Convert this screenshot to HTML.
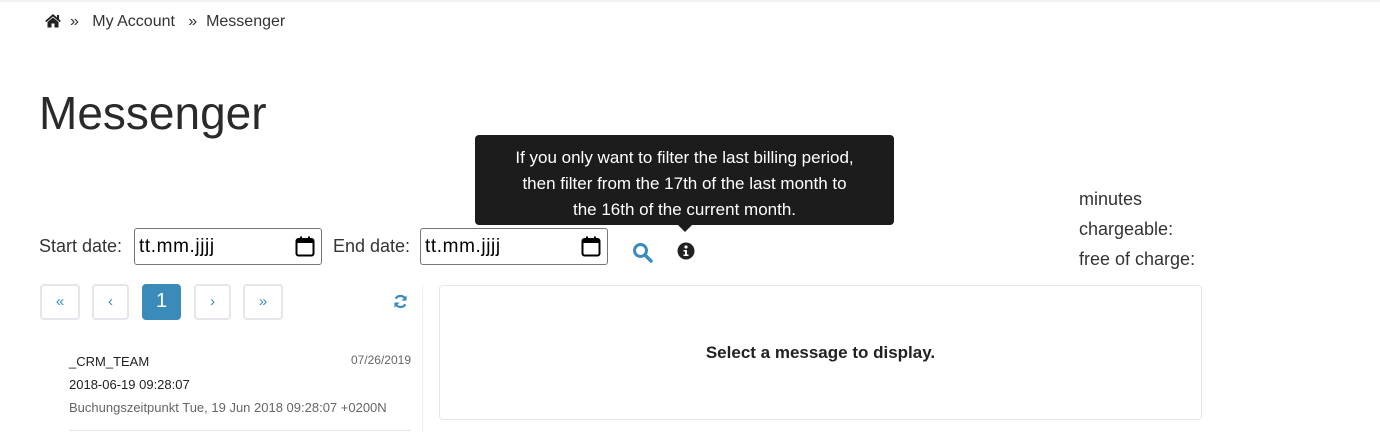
<!DOCTYPE html>
<html><head><meta charset="utf-8"><style>
*{box-sizing:border-box;margin:0;padding:0}
body{width:1380px;height:432px;overflow:hidden;background:#fff;font-family:"Liberation Sans","DejaVu Sans",sans-serif;color:#333;position:relative}
.a{position:absolute;white-space:nowrap}
.inp{position:absolute;border:1px solid #767676;border-radius:3px;height:37px;background:#fff;font-size:19px;color:#000;padding:7px 0 0 4px;letter-spacing:0.6px}
.btn{position:absolute;top:284px;height:36px;border:2px solid #e3e6ea;border-radius:4px;color:#3a8cc0;font-size:15px;text-align:center;line-height:31px}
</style></head><body>
<div class="a" style="left:0;top:0;width:1380px;height:2px;background:#f2f2f2"></div>
<svg class="a" style="left:44px;top:13px" width="18" height="15" viewBox="0 0 18 15"><path d="M9 1 L1 8 L2.5 9 L9 3.5 L15.5 9 L17 8 Z" fill="#222"/><path d="M3.5 9 L9 4.5 L14.5 9 V14.5 H10.5 V10.5 H7.5 V14.5 H3.5 Z" fill="#222"/><rect x="13" y="2" width="2" height="4" fill="#222"/></svg>
<div class="a" style="left:70px;top:13px;font-size:16px;color:#333">»&nbsp;&nbsp;&nbsp;My Account&nbsp;&nbsp;&nbsp;»&nbsp;&nbsp;Messenger</div>
<div class="a" style="left:39px;top:86px;font-size:46px;color:#2a2a2a">Messenger</div>

<div class="a" style="left:475px;top:135px;width:419px;height:90px;background:#1c1c1c;border-radius:4px;color:#fff;font-size:17px;line-height:26px;text-align:center;padding-top:10px">If you only want to filter the last billing period,<br>then filter from the 17th of the last month to<br>the 16th of the current month.</div>
<div class="a" style="left:678px;top:225px;width:0;height:0;border-left:7px solid transparent;border-right:7px solid transparent;border-top:7px solid #1c1c1c"></div>

<div class="a" style="left:39px;top:236px;font-size:18px">Start date:</div>
<div class="inp" style="left:134px;top:228px;width:188px">tt.mm.jjjj</div>
<svg class="a" style="left:295px;top:236px" width="20" height="21" viewBox="0 0 20 21"><rect x="1.5" y="3" width="17" height="16.5" rx="2" fill="none" stroke="#000" stroke-width="2"/><rect x="1.5" y="3" width="17" height="4" fill="#000"/><rect x="5" y="0.5" width="2" height="4" fill="#000"/><rect x="13" y="0.5" width="2" height="4" fill="#000"/></svg>
<div class="a" style="left:333px;top:236px;font-size:18px">End date:</div>
<div class="inp" style="left:420px;top:228px;width:188px">tt.mm.jjjj</div>
<svg class="a" style="left:581px;top:236px" width="20" height="21" viewBox="0 0 20 21"><rect x="1.5" y="3" width="17" height="16.5" rx="2" fill="none" stroke="#000" stroke-width="2"/><rect x="1.5" y="3" width="17" height="4" fill="#000"/><rect x="5" y="0.5" width="2" height="4" fill="#000"/><rect x="13" y="0.5" width="2" height="4" fill="#000"/></svg>
<svg class="a" style="left:632px;top:242px" width="22" height="22" viewBox="0 0 22 22"><circle cx="8.5" cy="8.5" r="6" fill="none" stroke="#3a8cc0" stroke-width="3"/><path d="M13 13 L19 19" stroke="#3a8cc0" stroke-width="3.5" stroke-linecap="round"/></svg>
<svg class="a" style="left:677px;top:242px" width="18" height="18" viewBox="0 0 18 18"><circle cx="9" cy="9" r="8.5" fill="#222"/><circle cx="9" cy="5" r="1.6" fill="#fff"/><path d="M6.5 8 H10 V12.5 H11.5 V14 H6.5 V12.5 H8 V9.5 H6.5 Z" fill="#fff"/></svg>

<div class="a" style="left:1079px;top:184px;font-size:18px;line-height:30px">minutes<br>chargeable:<br>free of charge:</div>

<div class="btn" style="left:40px;width:40px">«</div>
<div class="btn" style="left:92px;width:37px">‹</div>
<div class="btn" style="left:142px;width:39px;background:#3b8bba;border-color:#3b8bba;color:#fff;font-size:20px">1</div>
<div class="btn" style="left:194px;width:37px">›</div>
<div class="btn" style="left:243px;width:40px">»</div>
<svg class="a" style="left:393px;top:294px" width="15" height="15" viewBox="0 0 16 16"><path d="M13.5 6 A6 6 0 0 0 2.8 5" fill="none" stroke="#3a8cc0" stroke-width="2.4"/><path d="M14.5 1.5 V7 H9 Z" fill="#3a8cc0"/><path d="M2.5 10 A6 6 0 0 0 13.2 11" fill="none" stroke="#3a8cc0" stroke-width="2.4"/><path d="M1.5 14.5 V9 H7 Z" fill="#3a8cc0"/></svg>

<div class="a" style="left:422px;top:285px;width:1px;height:147px;background:#eee"></div>
<div class="a" style="left:439px;top:285px;width:763px;height:135px;border:1px solid #e6e6e6;border-radius:4px;text-align:center;font-weight:bold;font-size:17px;color:#222;padding-top:57px">Select a message to display.</div>

<div class="a" style="left:69px;top:354px;font-size:13px;color:#222">_CRM_TEAM</div>
<div class="a" style="left:340px;top:353px;width:71px;text-align:right;font-size:12px;color:#666">07/26/2019</div>
<div class="a" style="left:69px;top:377px;font-size:13px;color:#222">2018-06-19 09:28:07</div>
<div class="a" style="left:69px;top:400px;font-size:13px;color:#666">Buchungszeitpunkt Tue, 19 Jun 2018 09:28:07 +0200N</div>
<div class="a" style="left:69px;top:430px;width:342px;height:1px;background:#e6e6e6"></div>
</body></html>
